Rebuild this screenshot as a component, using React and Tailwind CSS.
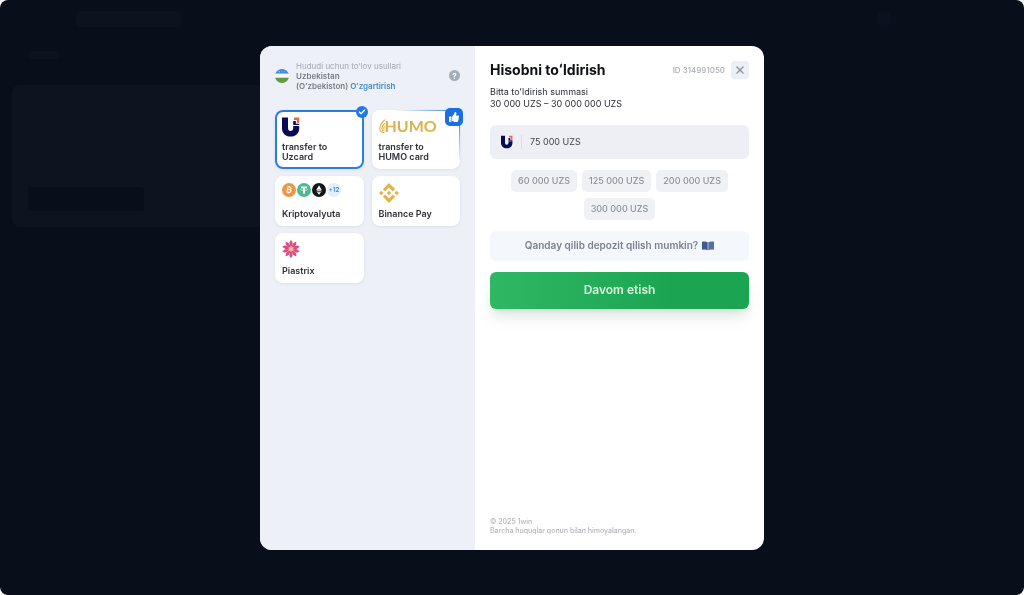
import { useState } from "react"
import { FaThumbsUp } from "react-icons/fa"
import { SiBinance } from "react-icons/si"
import { Check, X } from "lucide-react"

const QUICK_AMOUNTS = ['60 000 UZS', '125 000 UZS', '200 000 UZS', '300 000 UZS']

const UzcardLogo = ({ className }) => (
    <svg viewBox="0 0 18 20" className={className} aria-hidden="true">
        <path d="M0 .5h6v10.500c0 1.900 1 3 2.600 3s2.600-1.100 2.600-3V9h6v2.200c0 5-3.300 8.300-8.600 8.300S0 16.200 0 11.200z" fill="#0b0a57" />
        <path d="M11.200 4h2.600v2.800h3.400v1.200h-6z" fill="#0b0a57" />
        <path d="M12 .5h5.200v5.400h-2.300V2.900H12z" fill="#e4694a" />
    </svg>
)

const HumoLogo = () => (
    <span className="flex h-[18px] items-center text-[#dcb24c]">
        <svg viewBox="0 0 6 16" className="h-4 w-[6px]" fill="none" stroke="currentColor" strokeWidth="1.100" strokeLinecap="round" aria-hidden="true">
            <path d="M5.500 2C2.500 5 .6 8 .8 11c.2 2 1.700 3.300 4.200 3.700" />
            <path d="M5.500 5.500C3.600 7.500 2.600 9.200 2.900 10.900c.2 1.200 1 1.900 2.300 2.200" />
            <path d="M5.500 8.500c-.7.900-.9 1.700-.5 2.700" />
        </svg>
        <span className="font-['Lato',sans-serif] text-[16px] leading-4 font-bold">HUMO</span>
    </span>
)

const CryptoLogos = () => (
    <span className="flex gap-px">
        <svg viewBox="0 0 14 14" className="size-3.5" aria-hidden="true">
            <circle cx="7" cy="7" r="7" fill="#ec9646" />
            <path d="M5.600 3.800l2.400.5c1.700.4 1.500 2.300-.3 2.200 2 .4 1.500 3-.6 2.700l-2.700-.5M6 4l-1.100 5M5.500 6.200l2.200.4M7 3.200l-.2.900M8.200 3.500l-.2.800M5.700 9.100l-.2 1M6.900 9.300l-.2 1" fill="none" stroke="#fff" strokeWidth="1.100" />
        </svg>
        <svg viewBox="0 0 14 14" className="size-3.5" aria-hidden="true">
            <circle cx="7" cy="7" r="7" fill="#4fb795" />
            <path d="M3.800 3.500h6.400v1.600H7.900v5.700H6.100V5.100H3.800z" fill="#fff" />
            <ellipse cx="7" cy="6.600" rx="3.700" ry="0.900" fill="none" stroke="#fff" strokeWidth="0.500" />
        </svg>
        <svg viewBox="0 0 14 14" className="size-3.5" aria-hidden="true">
            <circle cx="7" cy="7" r="7" fill="#14141b" />
            <path d="M7 2.300l2.700 4.700L7 8.600 4.300 7z" fill="#fff" />
            <path d="M4.300 7.900L7 9.500l2.700-1.600L7 11.800z" fill="#fff" />
            <path d="M7 5.700L9.700 7 7 8.600 4.300 7z" fill="#b9b9c4" />
        </svg>
        <span className="flex size-3.5 items-center justify-center rounded-full bg-[#e3eefa] text-[6px] font-semibold text-[#3a86c8]">+12</span>
    </span>
)

const PiastrixLogo = () => (
    <svg viewBox="-9 -9 18 18" className="size-[18px]" aria-hidden="true">
        {[0, 36, 72, 108, 144, 180, 216, 252, 288, 324].map(a => (
            <path key={a} d="M0 -1.500C-2.300 -4.500 -1.900 -7 0 -9C1.900 -7 2.300 -4.500 0 -1.500z" fill="#dc4b85" transform={`rotate(${a})`} />
        ))}
        <circle r="2.300" fill="#f0a98f" />
        <circle r="1.100" fill="#f6d3a0" />
    </svg>
)

const UzbekFlag = () => (
    <svg viewBox="0 0 14 14" className="size-3.5 shrink-0" role="img" aria-label="Uzbekistan">
        <clipPath id="flag"><circle cx="7" cy="7" r="7" /></clipPath>
        <g clipPath="url(#flag)">
            <path d="M0 0h14v4.800H0z" fill="#3a8ddb" />
            <path d="M0 4.800h14v4H0z" fill="#f7f7f9" />
            <path d="M0 4.600h14v.5H0zM0 8.600h14v.5H0z" fill="#d9a0a5" />
            <path d="M0 9.100h14V14H0z" fill="#5c9c43" />
            <circle cx="4.200" cy="2.700" r="0.800" fill="#a9d2f7" />
            <path d="M6.500 2.300h1v1h-1zM8.600 2.300h1v1h-1z" fill="#84bbef" />
        </g>
    </svg>
)

const BookIcon = () => (
    <svg viewBox="0 0 12 10" className="h-2.5 w-3" aria-hidden="true">
        <path d="M0 .8C2.200.1 4.200.3 5.700 1.300v8C4.200 8.300 2.200 8.200 0 8.800z" fill="#41598c" />
        <path d="M12 .8C9.800.1 7.800.3 6.300 1.300v8c1.500-1 3.500-1.100 5.700-.5z" fill="#56709f" />
    </svg>
)

const METHODS = [
    { id: 'uzcard', lines: ['transfer to', 'Uzcard'], logo: <UzcardLogo className="h-5 w-[18px]" /> },
    { id: 'humo', lines: ['transfer to', 'HUMO card'], logo: <HumoLogo />, recommended: true },
    { id: 'crypto', lines: ['Kriptovalyuta'], logo: <CryptoLogos /> },
    { id: 'binance', lines: ['Binance Pay'], logo: <SiBinance className="size-5 text-[#e3b345]" /> },
    { id: 'piastrix', lines: ['Piastrix'], logo: <PiastrixLogo /> },
]

const MethodCard = ({ method, selected, onSelect }) => (
    <label
        className={`relative flex cursor-pointer flex-col justify-between rounded-lg bg-white px-[7px] py-[7px] shadow-sm shadow-slate-300/40
            ${method.lines.length > 1 ? 'min-h-[59px]' : 'min-h-[50px]'}
            ${selected ? 'ring-2 ring-[#2b7de0] ring-inset' : ''}
        `}
    >
        <input type="radio" name="method" className="sr-only" checked={selected} onChange={() => onSelect(method.id)} />
        {method.logo}
        <span className="text-[9px] leading-[10px] font-semibold text-[#303137]">
            {method.lines.map(l => <span key={l} className="block">{l}</span>)}
        </span>
        {selected && (
            <span className="absolute -top-1 -right-1 flex size-3 items-center justify-center rounded-full bg-[#1f78e6] text-white">
                <Check className="size-2" strokeWidth={4} />
            </span>
        )}
        {method.recommended && (
            <>
                <span className="absolute top-0 right-0 h-px w-3/4 bg-linear-to-l from-[#2b7de0] to-transparent"></span>
                <span className="absolute top-2 right-0 h-3/4 w-px bg-linear-to-b from-[#2b7de0] to-transparent"></span>
                <span className="absolute -top-0.5 -right-[3px] flex size-[18px] items-center justify-center rounded-[5px] bg-[#1b6fe3] text-white">
                    <FaThumbsUp className="size-2.5" />
                </span>
            </>
        )}
    </label>
)

// Dimmed page that stays behind the modal
const PageBehind = () => (
    <div className="flex flex-col px-3" aria-hidden="true">
        <div className="flex pt-[11px] pr-[120px] pl-16">
            <div className="h-4 w-[105px] rounded bg-[#0c121e]"></div>
            <div className="ml-auto h-4 w-4 rounded-full bg-[#0b121f]"></div>
        </div>
        <div className="mt-6 ml-4 h-2 w-8 rounded bg-[#0c131f]"></div>
        <div className="mt-[26px] flex h-[142px] w-1/2 items-end rounded-lg bg-[#0d1420] p-4">
            <div className="h-6 w-[116px] rounded bg-[#080f1b]"></div>
        </div>
    </div>
)

export default function App() {
    const [method, setMethod] = useState('uzcard')
    const [amount, setAmount] = useState('75 000 UZS')

    return (
        <div className="min-h-screen rounded-lg bg-[#080f1b] font-['Inter',sans-serif]">
            <PageBehind />

            <div className="fixed inset-0 flex items-center justify-center overflow-auto">
                <div role="dialog" aria-labelledby="title" className="flex min-h-[504px] w-full max-w-[504px] overflow-hidden rounded-xl bg-white">

                    {/* Payment methods */}
                    <aside className="w-[215px] shrink-0 bg-[#edf0f6] p-[15px]">
                        <div className="flex items-center gap-[7px]">
                            <UzbekFlag />
                            <div className="flex-1 text-[8px] leading-[10px] font-semibold text-[#777b84]">
                                <p className="font-normal text-[#a3a7b0]">Hududi uchun toʻlov usullari</p>
                                <p>Uzbekistan</p>
                                <p>(Oʻzbekiston) <a href="#region" className="font-semibold text-[#3c8fc4]">Oʻzgartirish</a></p>
                            </div>
                            <button aria-label="Yordam" className="flex size-[11px] items-center justify-center rounded-full bg-[#a4adbb] text-[8px] leading-none font-bold text-white">?</button>
                        </div>

                        <div className="mt-[19px] grid grid-cols-2 gap-x-2 gap-y-[7px]">
                            {METHODS.map(m => (
                                <MethodCard key={m.id} method={m} selected={m.id === method} onSelect={setMethod} />
                            ))}
                        </div>
                    </aside>

                    {/* Deposit form */}
                    <section className="flex min-w-0 flex-1 flex-col p-[15px]">
                        <div className="flex items-center">
                            <h1 id="title" className="flex-1 text-[14px] leading-[18px] font-bold text-[#101116]">Hisobni toʻldirish</h1>
                            <span className="mr-1.5 text-[8px] font-medium text-[#a9acb3]">ID 314991050</span>
                            <button aria-label="Yopish" className="flex size-[18px] items-center justify-center rounded bg-[#eceff5] text-[#8f97a5]">
                                <X className="size-3" strokeWidth={3} />
                            </button>
                        </div>

                        <p className="mt-[7px] text-[9px] leading-3 text-[#2b2d34]">
                            Bitta toʻldirish summasi<br />30 000 UZS – 30 000 000 UZS
                        </p>

                        <div className="mt-[15px] flex h-[34px] items-center rounded-md bg-[#edeff5] pr-3 pl-[11px]">
                            <UzcardLogo className="h-3.5 w-3" />
                            <span className="mx-2 h-3.5 w-px bg-[#d9dce4]"></span>
                            <input
                                aria-label="Summa"
                                value={amount}
                                onChange={(e) => setAmount(e.target.value)}
                                className="min-w-0 flex-1 bg-transparent text-[9px] text-[#42444c] outline-none"
                            />
                        </div>

                        <div className="mt-[11px] flex flex-wrap justify-center gap-x-[5px] gap-y-1.5">
                            {QUICK_AMOUNTS.map(a => (
                                <button key={a} onClick={() => setAmount(a)} className="h-[22px] rounded-[5px] bg-[#f0f1f5] px-[7px] text-[9px] font-medium text-[#8e919b]">
                                    {a}
                                </button>
                            ))}
                        </div>

                        <button className="mt-[11px] flex h-[30px] items-center justify-center gap-1 rounded-md bg-[#f4f7fb] text-[10px] font-semibold text-[#7a8291]">
                            Qanday qilib depozit qilish mumkin? <BookIcon />
                        </button>

                        <button className="mt-[11px] h-[37px] rounded-md bg-linear-to-r from-[#2fb763] to-[#1ba553] to-70% text-[12px] font-semibold text-[#d9f5dd] shadow-lg shadow-green-900/15">
                            Davom etish
                        </button>

                        <footer className="mt-auto text-[7px] leading-[9px] font-medium text-[#b4b6bb]">
                            <p>© 2025 1win</p>
                            <p>Barcha huquqlar qonun bilan himoyalangan.</p>
                        </footer>
                    </section>
                </div>
            </div>
        </div>
    )
}
